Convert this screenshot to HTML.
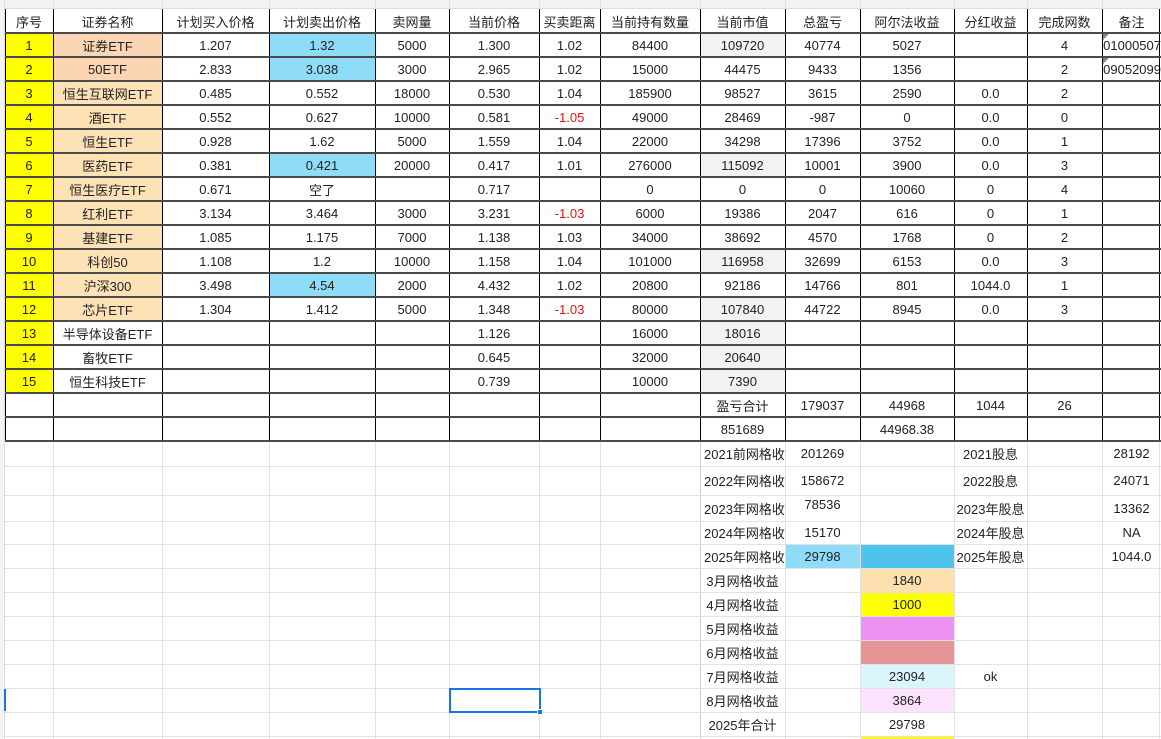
<!DOCTYPE html>
<html><head><meta charset="utf-8"><style>
*{box-sizing:border-box;margin:0;padding:0}
body{width:1161px;height:739px;overflow:hidden;background:#fff;position:relative;font-family:"Liberation Sans","Noto Sans CJK SC",sans-serif;font-size:13px;color:#222}
.top{position:absolute;left:0;top:0;width:1161px;height:9px;background:#f3f3f3;border-bottom:1px solid #ddd}
.left{position:absolute;left:0;top:0;width:5px;height:739px;background:#f3f3f3;border-right:1px solid #ddd}
.r{position:absolute;left:5px;display:flex;width:1156px}
.r>span{display:block;flex:none;height:100%;text-align:center;white-space:nowrap;overflow:hidden;display:flex;align-items:center;justify-content:center}
.r>span:nth-child(1){width:48px}.r>span:nth-child(2){width:109px}.r>span:nth-child(3){width:107px}.r>span:nth-child(4){width:106px}
.r>span:nth-child(5){width:74px}.r>span:nth-child(6){width:90px}.r>span:nth-child(7){width:61px}.r>span:nth-child(8){width:100px}
.r>span:nth-child(9){width:85px}.r>span:nth-child(10){width:75px}.r>span:nth-child(11){width:94px}.r>span:nth-child(12){width:73px}
.r>span:nth-child(13){width:75px}.r>span:nth-child(14){width:59px}
.y{background:#ffff00}.p1{background:#fcd5b4}.p2{background:#fde2b6}.b{background:#8fdcf8}.g{background:#f2f2f2}.red{color:#e81010}
.v{position:absolute;width:1px;background:#000}
.vl{position:absolute;width:1px;background:#e2e2e6}
.h{position:absolute;left:5px;width:1156px;height:2px;background:#4a4a4a}
.hl{position:absolute;left:5px;width:1156px;height:1px;background:#e2e2e6}
.lf{justify-content:flex-start!important;padding-left:4px}
.rt{justify-content:flex-end!important}
</style></head><body>
<div class="top"></div><div class="left"></div>

<div class="r" style="top:9px;height:24px"><span>序号</span><span>证券名称</span><span>计划买入价格</span><span>计划卖出价格</span><span>卖网量</span><span>当前价格</span><span>买卖距离</span><span>当前持有数量</span><span>当前市值</span><span>总盈亏</span><span>阿尔法收益</span><span>分红收益</span><span>完成网数</span><span>备注</span></div>
<div class="r" style="top:33px;height:24px"><span class="y">1</span><span class="p1">证券ETF</span><span>1.207</span><span class="b">1.32</span><span>5000</span><span>1.300</span><span>1.02</span><span>84400</span><span class="g">109720</span><span>40774</span><span>5027</span><span></span><span>4</span><span class="rt">2401000507</span></div>
<div class="r" style="top:57px;height:24px"><span class="y">2</span><span class="p1">50ETF</span><span>2.833</span><span class="b">3.038</span><span>3000</span><span>2.965</span><span>1.02</span><span>15000</span><span>44475</span><span>9433</span><span>1356</span><span></span><span>2</span><span class="rt">2309052099</span></div>
<div class="r" style="top:81px;height:24px"><span class="y">3</span><span class="p2">恒生互联网ETF</span><span>0.485</span><span>0.552</span><span>18000</span><span>0.530</span><span>1.04</span><span>185900</span><span>98527</span><span>3615</span><span>2590</span><span>0.0</span><span>2</span><span></span></div>
<div class="r" style="top:105px;height:24px"><span class="y">4</span><span class="p2">酒ETF</span><span>0.552</span><span>0.627</span><span>10000</span><span>0.581</span><span class="red">-1.05</span><span>49000</span><span>28469</span><span>-987</span><span>0</span><span>0.0</span><span>0</span><span></span></div>
<div class="r" style="top:129px;height:24px"><span class="y">5</span><span class="p2">恒生ETF</span><span>0.928</span><span>1.62</span><span>5000</span><span>1.559</span><span>1.04</span><span>22000</span><span>34298</span><span>17396</span><span>3752</span><span>0.0</span><span>1</span><span></span></div>
<div class="r" style="top:153px;height:24px"><span class="y">6</span><span class="p2">医药ETF</span><span>0.381</span><span class="b">0.421</span><span>20000</span><span>0.417</span><span>1.01</span><span>276000</span><span class="g">115092</span><span>10001</span><span>3900</span><span>0.0</span><span>3</span><span></span></div>
<div class="r" style="top:177px;height:24px"><span class="y">7</span><span class="p2">恒生医疗ETF</span><span>0.671</span><span>空了</span><span></span><span>0.717</span><span></span><span>0</span><span>0</span><span>0</span><span>10060</span><span>0</span><span>4</span><span></span></div>
<div class="r" style="top:201px;height:24px"><span class="y">8</span><span class="p2">红利ETF</span><span>3.134</span><span>3.464</span><span>3000</span><span>3.231</span><span class="red">-1.03</span><span>6000</span><span>19386</span><span>2047</span><span>616</span><span>0</span><span>1</span><span></span></div>
<div class="r" style="top:225px;height:24px"><span class="y">9</span><span class="p2">基建ETF</span><span>1.085</span><span>1.175</span><span>7000</span><span>1.138</span><span>1.03</span><span>34000</span><span>38692</span><span>4570</span><span>1768</span><span>0</span><span>2</span><span></span></div>
<div class="r" style="top:249px;height:24px"><span class="y">10</span><span class="p2">科创50</span><span>1.108</span><span>1.2</span><span>10000</span><span>1.158</span><span>1.04</span><span>101000</span><span class="g">116958</span><span>32699</span><span>6153</span><span>0.0</span><span>3</span><span></span></div>
<div class="r" style="top:273px;height:24px"><span class="y">11</span><span class="p2">沪深300</span><span>3.498</span><span class="b">4.54</span><span>2000</span><span>4.432</span><span>1.02</span><span>20800</span><span>92186</span><span>14766</span><span>801</span><span>1044.0</span><span>1</span><span></span></div>
<div class="r" style="top:297px;height:24px"><span class="y">12</span><span class="p2">芯片ETF</span><span>1.304</span><span>1.412</span><span>5000</span><span>1.348</span><span class="red">-1.03</span><span>80000</span><span class="g">107840</span><span>44722</span><span>8945</span><span>0.0</span><span>3</span><span></span></div>
<div class="r" style="top:321px;height:24px"><span class="y">13</span><span>半导体设备ETF</span><span></span><span></span><span></span><span>1.126</span><span></span><span>16000</span><span class="g">18016</span><span></span><span></span><span></span><span></span><span></span></div>
<div class="r" style="top:345px;height:24px"><span class="y">14</span><span>畜牧ETF</span><span></span><span></span><span></span><span>0.645</span><span></span><span>32000</span><span class="g">20640</span><span></span><span></span><span></span><span></span><span></span></div>
<div class="r" style="top:369px;height:24px"><span class="y">15</span><span>恒生科技ETF</span><span></span><span></span><span></span><span>0.739</span><span></span><span>10000</span><span class="g">7390</span><span></span><span></span><span></span><span></span><span></span></div>
<div class="r" style="top:393px;height:24px"><span></span><span></span><span></span><span></span><span></span><span></span><span></span><span></span><span>盈亏合计</span><span>179037</span><span>44968</span><span>1044</span><span>26</span><span></span></div>
<div class="r" style="top:417px;height:24px"><span></span><span></span><span></span><span></span><span></span><span></span><span></span><span></span><span>851689</span><span></span><span>44968.38</span><span></span><span></span><span></span></div>

<div class="r" style="top:441px;height:25px"><span></span><span></span><span></span><span></span><span></span><span></span><span></span><span></span><span class="lf">2021前网格收</span><span>201269</span><span></span><span>2021股息</span><span></span><span>28192</span></div>
<div class="r" style="top:466px;height:29px"><span></span><span></span><span></span><span></span><span></span><span></span><span></span><span></span><span class="lf">2022年网格收</span><span>158672</span><span></span><span>2022股息</span><span></span><span>24071</span></div>
<div class="r" style="top:495px;height:26px"><span></span><span></span><span></span><span></span><span></span><span></span><span></span><span></span><span class="lf">2023年网格收</span><span style="align-items:flex-start;padding-top:2px">78536</span><span></span><span>2023年股息</span><span></span><span>13362</span></div>
<div class="r" style="top:521px;height:23px"><span></span><span></span><span></span><span></span><span></span><span></span><span></span><span></span><span class="lf">2024年网格收</span><span>15170</span><span></span><span>2024年股息</span><span></span><span>NA</span></div>
<div class="r" style="top:544px;height:24px"><span></span><span></span><span></span><span></span><span></span><span></span><span></span><span></span><span class="lf">2025年网格收</span><span class="b">29798</span><span style="background:#4ec3ee"></span><span>2025年股息</span><span></span><span>1044.0</span></div>
<div class="r" style="top:568px;height:24px"><span></span><span></span><span></span><span></span><span></span><span></span><span></span><span></span><span>3月网格收益</span><span></span><span style="background:#fde0b0">1840</span><span></span><span></span><span></span></div>
<div class="r" style="top:592px;height:24px"><span></span><span></span><span></span><span></span><span></span><span></span><span></span><span></span><span>4月网格收益</span><span></span><span class="y">1000</span><span></span><span></span><span></span></div>
<div class="r" style="top:616px;height:24px"><span></span><span></span><span></span><span></span><span></span><span></span><span></span><span></span><span>5月网格收益</span><span></span><span style="background:#ec92f0"></span><span></span><span></span><span></span></div>
<div class="r" style="top:640px;height:24px"><span></span><span></span><span></span><span></span><span></span><span></span><span></span><span></span><span>6月网格收益</span><span></span><span style="background:#e69697"></span><span></span><span></span><span></span></div>
<div class="r" style="top:664px;height:24px"><span></span><span></span><span></span><span></span><span></span><span></span><span></span><span></span><span>7月网格收益</span><span></span><span style="background:#dbf5fd">23094</span><span>ok</span><span></span><span></span></div>
<div class="r" style="top:688px;height:24px"><span></span><span></span><span></span><span></span><span></span><span></span><span></span><span></span><span>8月网格收益</span><span></span><span style="background:#fde2fd">3864</span><span></span><span></span><span></span></div>
<div class="r" style="top:712px;height:24px"><span></span><span></span><span></span><span></span><span></span><span></span><span></span><span></span><span>2025年合计</span><span></span><span>29798</span><span></span><span></span><span></span></div>
<div class="r" style="top:736px;height:3px"><span></span><span></span><span></span><span></span><span></span><span></span><span></span><span></span><span></span><span></span><span class="y"></span><span></span><span></span><span></span></div>

<!-- upper vertical lines -->
<div class="v" style="left:5px;top:9px;height:432px"></div>
<div class="v" style="left:53px;top:9px;height:432px"></div>
<div class="v" style="left:162px;top:9px;height:432px"></div>
<div class="v" style="left:269px;top:9px;height:432px"></div>
<div class="v" style="left:375px;top:9px;height:432px"></div>
<div class="v" style="left:449px;top:9px;height:432px"></div>
<div class="v" style="left:539px;top:9px;height:432px"></div>
<div class="v" style="left:600px;top:9px;height:432px"></div>
<div class="v" style="left:700px;top:9px;height:432px"></div>
<div class="v" style="left:785px;top:9px;height:432px"></div>
<div class="v" style="left:860px;top:9px;height:432px"></div>
<div class="v" style="left:954px;top:9px;height:432px"></div>
<div class="v" style="left:1027px;top:9px;height:432px"></div>
<div class="v" style="left:1102px;top:9px;height:432px"></div>
<div class="v" style="left:1159px;top:9px;height:432px"></div>
<!-- lower vertical lines -->
<div class="vl" style="left:53px;top:441px;height:298px"></div>
<div class="vl" style="left:162px;top:441px;height:298px"></div>
<div class="vl" style="left:269px;top:441px;height:298px"></div>
<div class="vl" style="left:375px;top:441px;height:298px"></div>
<div class="vl" style="left:449px;top:441px;height:298px"></div>
<div class="vl" style="left:539px;top:441px;height:298px"></div>
<div class="vl" style="left:600px;top:441px;height:298px"></div>
<div class="v" style="left:700px;top:441px;height:298px;background:#d0d0d4"></div>
<div class="vl" style="left:785px;top:441px;height:298px"></div>
<div class="vl" style="left:860px;top:441px;height:298px"></div>
<div class="vl" style="left:954px;top:441px;height:298px"></div>
<div class="vl" style="left:1027px;top:441px;height:298px"></div>
<div class="vl" style="left:1102px;top:441px;height:298px"></div>
<div class="vl" style="left:1159px;top:441px;height:298px"></div>
<!-- top strip lines -->
<div class="vl" style="left:53px;top:0;height:9px"></div><div class="vl" style="left:162px;top:0;height:9px"></div><div class="vl" style="left:269px;top:0;height:9px"></div><div class="vl" style="left:375px;top:0;height:9px"></div><div class="vl" style="left:449px;top:0;height:9px"></div><div class="vl" style="left:539px;top:0;height:9px"></div><div class="vl" style="left:600px;top:0;height:9px"></div><div class="vl" style="left:700px;top:0;height:9px"></div><div class="vl" style="left:785px;top:0;height:9px"></div><div class="vl" style="left:860px;top:0;height:9px"></div><div class="vl" style="left:954px;top:0;height:9px"></div><div class="vl" style="left:1027px;top:0;height:9px"></div><div class="vl" style="left:1102px;top:0;height:9px"></div>
<!-- upper horizontal lines -->
<div class="h" style="top:32px"></div><div class="h" style="top:56px"></div><div class="h" style="top:80px"></div><div class="h" style="top:104px"></div><div class="h" style="top:128px"></div><div class="h" style="top:152px"></div><div class="h" style="top:176px"></div><div class="h" style="top:200px"></div><div class="h" style="top:224px"></div><div class="h" style="top:248px"></div><div class="h" style="top:272px"></div><div class="h" style="top:296px"></div><div class="h" style="top:320px"></div><div class="h" style="top:344px"></div><div class="h" style="top:368px"></div><div class="h" style="top:392px"></div><div class="h" style="top:416px"></div><div class="h" style="top:440px"></div>
<!-- lower horizontal lines -->
<div class="hl" style="top:466px"></div><div class="hl" style="top:495px"></div><div class="hl" style="top:521px"></div><div class="hl" style="top:544px"></div><div class="hl" style="top:568px"></div><div class="hl" style="top:592px"></div><div class="hl" style="top:616px"></div><div class="hl" style="top:640px"></div><div class="hl" style="top:664px"></div><div class="hl" style="top:688px"></div><div class="hl" style="top:712px"></div><div class="hl" style="top:736px"></div>
<!-- comment markers -->
<div style="position:absolute;left:1103px;top:34px;width:0;height:0;border-top:6px solid #888;border-right:6px solid transparent"></div>
<div style="position:absolute;left:1103px;top:58px;width:0;height:0;border-top:6px solid #888;border-right:6px solid transparent"></div>
<!-- selection -->
<div style="position:absolute;left:449px;top:688px;width:92px;height:25px;border:2px solid #1a73e8"></div>
<div style="position:absolute;left:537px;top:709px;width:6px;height:6px;background:#1a73e8;border:1px solid #fff"></div>
<div style="position:absolute;left:4px;top:689px;width:2px;height:22px;background:#1a73e8"></div>
</body></html>
